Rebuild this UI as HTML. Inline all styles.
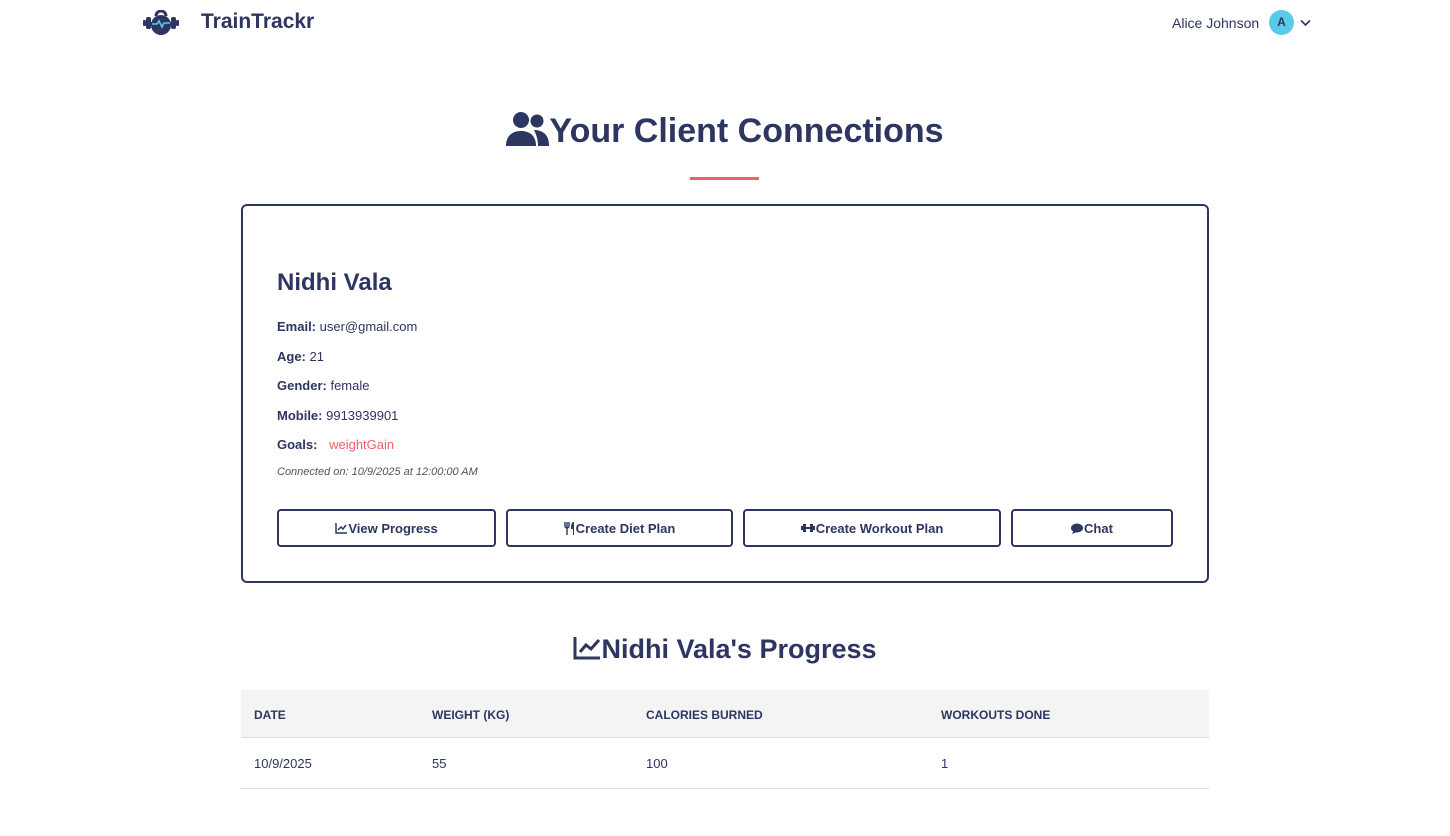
<!DOCTYPE html>
<html><head><meta charset="utf-8"><style>
*{box-sizing:border-box;margin:0;padding:0}
body{width:1450px;height:836px;background:#fff;font-family:"Liberation Sans",sans-serif;color:#2d3561;position:relative;overflow:hidden}
.abs{position:absolute}
.logo{left:201px;top:10px;font-size:21px;font-weight:bold;color:#2d3561}
.user{left:1172px;top:15px;font-size:14px;color:#2d3561}
.av{left:1269px;top:10px;width:25px;height:25px;border-radius:50%;background:#5bc9e8;color:#2d3561;font-size:12px;font-weight:bold;text-align:center;line-height:25px}
h1{position:absolute;left:0;width:1450px;top:111px;text-align:center;font-size:34px;font-weight:bold}
.bar{left:690px;top:177px;width:69px;height:3px;background:#f0606b}
.card{left:241px;top:204px;width:968px;height:379px;border:2px solid #2d3561;border-radius:6px}
.name{left:277px;top:269px;font-size:24px;font-weight:bold}
.f{left:277px;font-size:13px;color:#2d3561}
.f b{font-weight:bold}
.btn{top:509px;height:38px;border:2px solid #2d3561;border-radius:4px;font-size:13px;font-weight:bold;display:flex;align-items:center;justify-content:center;gap:1px}
h2{position:absolute;left:0;width:1450px;top:634px;text-align:center;font-size:27px;font-weight:bold}
.th{top:690px;left:241px;width:968px;height:48px;background:#f4f4f4;border-bottom:1px solid #ddd}
.tr{top:739px;left:241px;width:968px;height:50px;border-bottom:1px solid #ddd}
.c{font-size:12px;font-weight:bold;top:708px}
.d{font-size:13px;top:756px}
</style></head><body>
<svg class="abs" style="left:143px;top:10px" width="36" height="25" viewBox="0 0 36 25"><rect x="0" y="10" width="3" height="6" rx="1" fill="#2d3561"/><rect x="3" y="7" width="5" height="12" rx="2" fill="#2d3561"/><rect x="28" y="7" width="5" height="12" rx="2" fill="#2d3561"/><rect x="33" y="10" width="3" height="6" rx="1" fill="#2d3561"/><rect x="8" y="12" width="20" height="2" fill="#2d3561"/><circle cx="18" cy="15" r="10" fill="#2d3561"/><path d="M13 6a5 5 0 0 1 10 0" stroke="#2d3561" stroke-width="3" fill="none"/><path d="M9 14h5l2-3 3 6 2-4h6" stroke="#5bc9e8" stroke-width="1.6" fill="none"/></svg>
<div class="abs logo">TrainTrackr</div>
<div class="abs user">Alice Johnson</div>
<div class="abs av">A</div>
<svg class="abs" style="left:1300px;top:19px" width="11" height="8" viewBox="0 0 11 8"><path d="M1 1.5l4.5 4.5 4.5-4.5" stroke="#2d3561" stroke-width="1.6" fill="none"/></svg>
<h1><svg width="43" height="35" viewBox="0 0 43 35" style="vertical-align:-4px"><circle cx="15" cy="9" r="8" fill="#2d3561"/><circle cx="31" cy="10" r="6.5" fill="#2d3561"/><path d="M0 35c0-10 6-15 15-15s15 5 15 15z" fill="#2d3561"/><path d="M28 19c9 0 15 5 15 15v1H32c0-7-2-12-4-16z" fill="#2d3561"/></svg>Your Client Connections</h1>
<div class="abs bar"></div>
<div class="abs card"></div>
<div class="abs name">Nidhi Vala</div>
<div class="abs f" style="top:319px"><b>Email:</b> user@gmail.com</div>
<div class="abs f" style="top:349px"><b>Age:</b> 21</div>
<div class="abs f" style="top:378px"><b>Gender:</b> female</div>
<div class="abs f" style="top:408px"><b>Mobile:</b> 9913939901</div>
<div class="abs f" style="top:437px"><b>Goals:</b> <span style="color:#f0606b;margin-left:8px">weightGain</span></div>
<div class="abs f" style="top:466px;font-size:11px;font-style:italic;color:#555">Connected on: 10/9/2025 at 12:00:00 AM</div>
<div class="abs btn" style="left:277px;width:219px"><svg width="12" height="11" viewBox="0 0 12 11"><path d="M1 0v10h11" stroke="#2d3561" stroke-width="1.5" fill="none"/><path d="M3 7l3-3 2 2 3-4" stroke="#2d3561" stroke-width="1.5" fill="none"/></svg>View Progress</div>
<div class="abs btn" style="left:506px;width:227px"><svg width="11" height="13" viewBox="0 0 11 13"><path d="M1 0v4a2 2 0 0 0 4 0V0M3 0v13" stroke="#2d3561" stroke-width="1.4" fill="none"/><path d="M9 0c-2 1-2 5-2 7h2v6h1V0z" fill="#2d3561"/></svg>Create Diet Plan</div>
<div class="abs btn" style="left:743px;width:258px"><svg width="14" height="10" viewBox="0 0 14 10"><rect x="0" y="3" width="2" height="4" fill="#2d3561"/><rect x="2" y="1" width="3" height="8" fill="#2d3561"/><rect x="5" y="4" width="4" height="2" fill="#2d3561"/><rect x="9" y="1" width="3" height="8" fill="#2d3561"/><rect x="12" y="3" width="2" height="4" fill="#2d3561"/></svg>Create Workout Plan</div>
<div class="abs btn" style="left:1011px;width:162px"><svg width="12" height="11" viewBox="0 0 12 11"><ellipse cx="6" cy="5" rx="6" ry="4.5" fill="#2d3561"/><path d="M1 11l2-4 3 2z" fill="#2d3561"/></svg>Chat</div>
<h2><svg width="28" height="24" viewBox="0 0 28 24" style="vertical-align:-2px"><path d="M2 1v21h25" stroke="#2d3561" stroke-width="3" fill="none"/><path d="M7 16l6-7 5 4 8-9" stroke="#2d3561" stroke-width="3" fill="none"/></svg>Nidhi Vala's Progress</h2>
<div class="abs th"></div><div class="abs tr"></div>
<div class="abs c" style="left:254px">DATE</div>
<div class="abs c" style="left:432px">WEIGHT (KG)</div>
<div class="abs c" style="left:646px">CALORIES BURNED</div>
<div class="abs c" style="left:941px">WORKOUTS DONE</div>
<div class="abs d" style="left:254px">10/9/2025</div>
<div class="abs d" style="left:432px">55</div>
<div class="abs d" style="left:646px">100</div>
<div class="abs d" style="left:941px">1</div>
</body></html>
